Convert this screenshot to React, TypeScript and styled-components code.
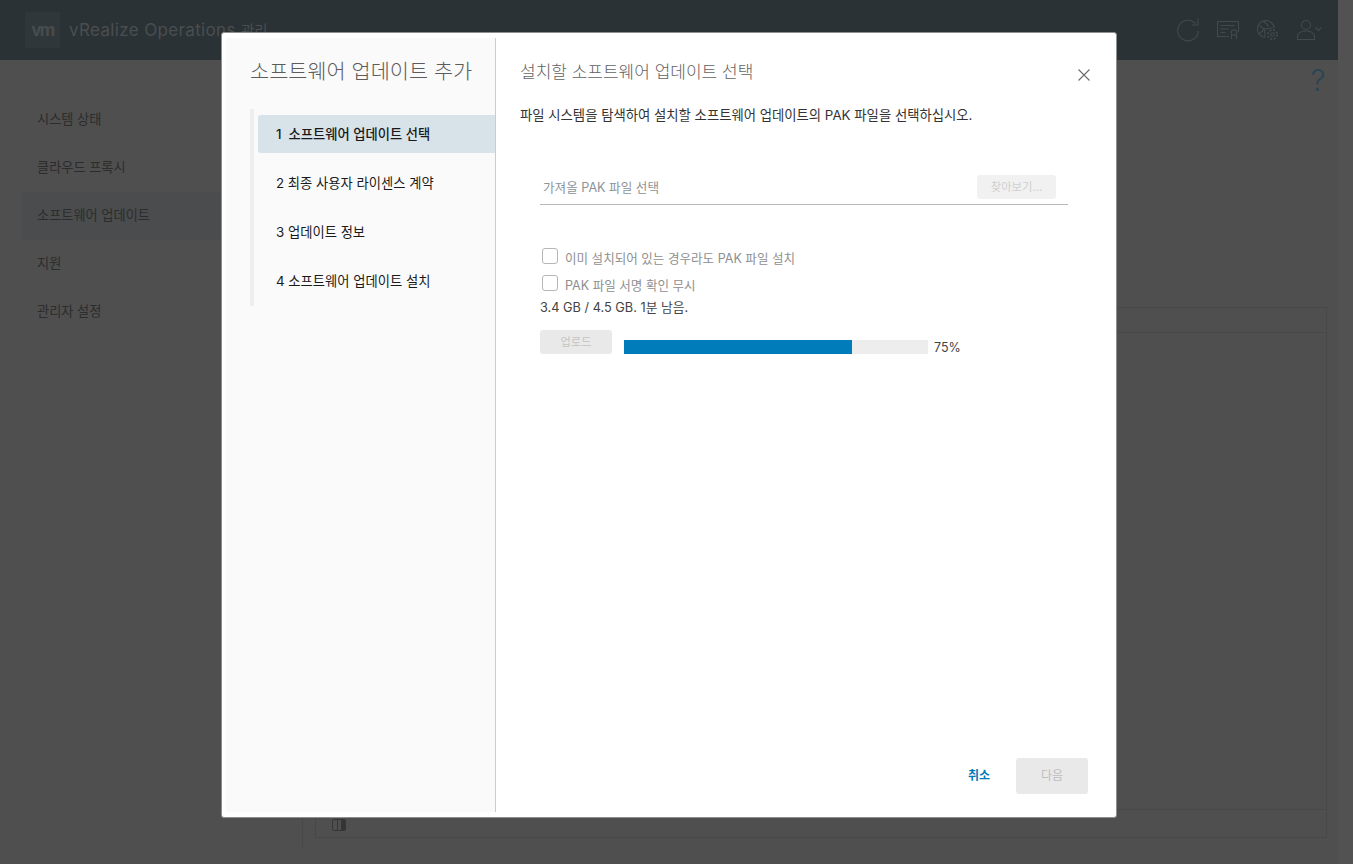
import type { FC } from "react";
import styled, { createGlobalStyle } from "styled-components";

const GlobalStyle = createGlobalStyle`
  html, body {
    margin: 0;
    padding: 0;
    height: 100%;
    overflow: hidden;
    background: #505050;
    font-family: "Inter", "Noto Sans CJK KR", sans-serif;
  }
  * { box-sizing: border-box; }
`;

const Page = styled.div`
  width: 1353px;
  height: 864px;
  position: relative;
  overflow: hidden;
  background: #525252;
`;

const Shell = styled.div`
  width: 1338px;
  height: 864px;
  display: flex;
  flex-direction: column;
  background: #4f4f4f;
`;

const Header = styled.header`
  height: 60px;
  flex: none;
  background: #2a3235;
  display: flex;
  align-items: center;
  padding: 0 16px 0 25px;
`;

const LogoBox = styled.div`
  width: 35px;
  height: 36px;
  background: #2f373a;
  display: flex;
  align-items: center;
  justify-content: center;
  color: #484c4e;
  font-size: 17px;
  font-weight: 700;
  letter-spacing: -1.5px;
`;

const ProductName = styled.div`
  margin: -2px 0 0 9px;
  color: #4a4e50;
  font-size: 17px;
  letter-spacing: 0.35px;
  white-space: nowrap;
`;

const ProductSuffix = styled.span`
  font-size: 14.5px;
  letter-spacing: 0;
`;

const HeaderIcons = styled.div`
  margin-left: auto;
  display: flex;
  align-items: center;
  gap: 18px;
  color: #43494c;
`;

const Body = styled.div`
  flex: 1;
  display: flex;
  min-height: 0;
`;

const Sidebar = styled.nav`
  width: 303px;
  flex: none;
  height: 788px;
  padding: 36px 0 0 22px;
  border-right: 1px solid #484848;
`;

const NavItem = styled.div<{ $active?: boolean }>`
  height: 48px;
  padding: 0 0 3px 15px;
  display: flex;
  align-items: center;
  font-size: 13.2px;
  color: #2c2c2c;
  background: ${({ $active }) => ($active ? "#4a4c4d" : "transparent")};
`;

const Content = styled.main`
  flex: 1;
  min-width: 0;
  padding: 247px 11px 26px 12px;
  display: flex;
  flex-direction: column;
`;

const TableBox = styled.div`
  flex: 1;
  border: 1px solid #484848;
  display: flex;
  flex-direction: column;
`;

const TableHead = styled.div`
  height: 25px;
  flex: none;
  border-bottom: 1px solid #484848;
`;

const TableBody = styled.div`
  flex: 1;
`;

const TableFoot = styled.div`
  height: 28px;
  flex: none;
  border-top: 1px solid #484848;
  display: flex;
  align-items: center;
  padding: 3px 0 0 16px;
`;

const ColumnToggle = styled.div`
  width: 14px;
  height: 12px;
  border: 1px solid #353535;
  border-radius: 2px;
  background: linear-gradient(
    90deg,
    #4f4f4f 0 4px,
    #353535 4px 5px,
    #4f4f4f 5px 8px,
    #353535 8px 100%
  );
`;

const HelpMark = styled.div`
  position: absolute;
  left: 1308px;
  top: 62px;
  width: 20px;
  text-align: center;
  color: #2a4453;
  font-size: 30px;
  font-weight: 300;
  line-height: 36px;
`;

const Overlay = styled.div`
  position: absolute;
  inset: 0;
  display: flex;
  align-items: flex-start;
  padding: 32px 0 0 221px;
`;

const Modal = styled.section`
  width: 896px;
  height: 786px;
  background: #fff;
  border: 1px solid #8f8f8f;
  border-radius: 3px;
  padding: 5px 0 5px 4px;
  display: flex;
  position: relative;
`;

const StepPanel = styled.aside`
  width: 270px;
  flex: none;
  background: #fafafa;
  border-right: 1px solid #cccccc;
  padding: 0 0 0 24px;
`;

const StepTitle = styled.h1`
  margin: 0;
  padding-top: 20px;
  height: 71px;
  font-size: 20.8px;
  line-height: 28px;
  font-weight: 300;
  color: #5c5c5c;
  white-space: nowrap;
`;

const StepList = styled.ol`
  list-style: none;
  margin: 0;
  padding: 6px 0 0 4px;
  height: 197px;
  border-left: 4px solid #eeeeee;
  display: flex;
  flex-direction: column;
  gap: 11px;
`;

const Step = styled.li<{ $active?: boolean }>`
  height: 38px;
  flex: none;
  padding: 0 0 2px 18px;
  display: flex;
  align-items: center;
  font-size: 13.3px;
  color: #1a1a1a;
  border-radius: 3px 0 0 3px;
  white-space: pre;
  background: ${({ $active }) => ($active ? "#d8e3e9" : "transparent")};
  font-weight: ${({ $active }) => ($active ? 500 : 400)};
`;

const Main = styled.div`
  flex: 1;
  min-width: 0;
  padding: 20px 28px 18px 24px;
  display: flex;
  flex-direction: column;
`;

const PaneTitle = styled.h2`
  margin: 0;
  font-size: 17px;
  line-height: 28px;
  font-weight: 300;
  color: #626262;
`;

const Intro = styled.p`
  margin: 19px 0 0;
  font-size: 13.35px;
  line-height: 20px;
  color: #333;
  white-space: nowrap;
`;

const Form = styled.div`
  padding: 0 0 0 20px;
  flex: 1;
  display: flex;
  flex-direction: column;
`;

const FileRow = styled.div`
  margin-top: 50px;
  width: 528px;
  height: 30px;
  border-bottom: 1px solid #b8b8b8;
  padding: 0 12px 0 3px;
  display: flex;
  align-items: flex-start;
  justify-content: space-between;
`;

const FilePlaceholder = styled.span`
  font-size: 12.6px;
  line-height: 26px;
  color: #8c9499;
`;

const BrowseButton = styled.div`
  width: 79px;
  height: 24px;
  background: #f1f1f1;
  border-radius: 3px;
  color: #cfcfcf;
  font-size: 11.3px;
  line-height: 24px;
  text-align: center;
`;

const OptionList = styled.div`
  margin-top: 42px;
  display: flex;
  flex-direction: column;
  gap: 9px;
`;

const Option = styled.label`
  display: flex;
  align-items: center;
  height: 18px;
  padding-left: 2px;
  font-size: 12.55px;
  color: #8f8f8f;
`;

const OptionText = styled.span`
  padding-top: 3px;
`;

const Checkbox = styled.span`
  width: 16px;
  height: 16px;
  border: 1px solid #b6b6b6;
  border-radius: 3px;
  margin-right: 7px;
  background: #fff;
`;

const ProgressNote = styled.div`
  margin-top: 7px;
  font-size: 12.75px;
  line-height: 18px;
  color: #444;
`;

const UploadRow = styled.div`
  margin-top: 13px;
  display: flex;
  align-items: flex-start;
`;

const UploadButton = styled.div`
  width: 72px;
  height: 24px;
  background: #e9e9e9;
  border-radius: 3px;
  color: #c4c4c4;
  font-size: 11.2px;
  line-height: 24px;
  text-align: center;
`;

const Track = styled.div`
  width: 304px;
  height: 14px;
  margin: 10px 0 0 12px;
  background: #ededed;
`;

const Fill = styled.div`
  height: 100%;
  background: #007cbb;
`;

const Percent = styled.span`
  margin: 10px 0 0 6px;
  font-size: 12.5px;
  line-height: 16px;
  color: #444;
`;

const Footer = styled.div`
  margin-top: auto;
  display: flex;
  justify-content: flex-end;
  align-items: center;
  gap: 26px;
`;

const CancelButton = styled.div`
  padding-bottom: 4px;
  font-size: 12px;
  font-weight: 700;
  color: #0079b8;
`;

const NextButton = styled.div`
  width: 72px;
  height: 36px;
  background: #e9e9e9;
  border-radius: 3px;
  color: #bdbdbd;
  font-size: 12px;
  line-height: 35px;
  text-align: center;
`;

const CloseButton = styled.div`
  position: absolute;
  left: 856px;
  top: 36px;
  width: 12px;
  height: 12px;
  color: #6b6b6b;
  display: flex;
`;

const RefreshIcon: FC = () => (
  <svg width="22" height="24" viewBox="0 0 22 24" fill="none" stroke="currentColor" strokeWidth="1.1">
    <path d="M18.5 5.5A10.3 10.3 0 1 0 21.3 13" />
    <path d="M21 0.5v6.5h-6.5" />
  </svg>
);

const CertificateIcon: FC = () => (
  <svg width="22" height="18" viewBox="0 0 22 18" fill="none" stroke="currentColor" strokeWidth="1.1">
    <path d="M12 15.5H0.5V0.5h21V11" />
    <path d="M3.5 4.5h14M3.5 8h8M3.5 11.5h5" />
    <circle cx="17" cy="11.5" r="2.8" />
    <path d="M14.5 18v-4M19.5 18v-4" />
  </svg>
);

const GlobeGearIcon: FC = () => (
  <svg width="22" height="21" viewBox="0 0 22 21" fill="none" stroke="currentColor" strokeWidth="1.1">
    <path d="M8.5 17.5A8.5 8.5 0 1 1 17.3 8" />
    <path d="M1.5 5l6 4-5.5 5M6.5 1 12 6.5M7.5 9l8-1M7.5 9 8 17" />
    <circle cx="15.5" cy="14.5" r="1.8" />
    <circle cx="15.5" cy="14.5" r="4.6" strokeWidth="1.8" strokeDasharray="2 1.6" />
  </svg>
);

const UserIcon: FC = () => (
  <svg width="25" height="20" viewBox="0 0 25 20" fill="none" stroke="currentColor" strokeWidth="1.1">
    <circle cx="9" cy="5" r="4.5" />
    <path d="M0.5 19.5v-3.5c0-3 4-5 8.5-5s8.5 2 8.5 5v3.5z" />
    <path d="M18.5 7.5l3 3 3-3" />
  </svg>
);

const navItems = ["시스템 상태", "클라우드 프록시", "소프트웨어 업데이트", "지원", "관리자 설정"];

const steps = [
  "1  소프트웨어 업데이트 선택",
  "2 최종 사용자 라이센스 계약",
  "3 업데이트 정보",
  "4 소프트웨어 업데이트 설치",
];

const App: FC = () => {
  const progress = 75;

  return (
    <Page>
      <GlobalStyle />
      <Shell>
        <Header>
          <LogoBox>vm</LogoBox>
          <ProductName>
            vRealize Operations <ProductSuffix>관리</ProductSuffix>
          </ProductName>
          <HeaderIcons>
            <RefreshIcon />
            <CertificateIcon />
            <GlobeGearIcon />
            <UserIcon />
          </HeaderIcons>
        </Header>
        <Body>
          <Sidebar>
            {navItems.map((item) => (
              <NavItem key={item} $active={item === "소프트웨어 업데이트"}>
                {item}
              </NavItem>
            ))}
          </Sidebar>
          <Content>
            <TableBox>
              <TableHead />
              <TableBody />
              <TableFoot>
                <ColumnToggle />
              </TableFoot>
            </TableBox>
          </Content>
        </Body>
      </Shell>
      <HelpMark>?</HelpMark>
      <Overlay>
        <Modal>
          <StepPanel>
            <StepTitle>소프트웨어 업데이트 추가</StepTitle>
            <StepList>
              {steps.map((step, i) => (
                <Step key={step} $active={i === 0}>
                  {step}
                </Step>
              ))}
            </StepList>
          </StepPanel>
          <Main>
            <PaneTitle>설치할 소프트웨어 업데이트 선택</PaneTitle>
            <Intro>파일 시스템을 탐색하여 설치할 소프트웨어 업데이트의 PAK 파일을 선택하십시오.</Intro>
            <Form>
              <FileRow>
                <FilePlaceholder>가져올 PAK 파일 선택</FilePlaceholder>
                <BrowseButton>찾아보기...</BrowseButton>
              </FileRow>
              <OptionList>
                <Option>
                  <Checkbox />
                  <OptionText>이미 설치되어 있는 경우라도 PAK 파일 설치</OptionText>
                </Option>
                <Option>
                  <Checkbox />
                  <OptionText>PAK 파일 서명 확인 무시</OptionText>
                </Option>
              </OptionList>
              <ProgressNote>3.4 GB / 4.5 GB. 1분 남음.</ProgressNote>
              <UploadRow>
                <UploadButton>업로드</UploadButton>
                <Track>
                  <Fill style={{ width: `${progress}%` }} />
                </Track>
                <Percent>{progress}%</Percent>
              </UploadRow>
            </Form>
            <Footer>
              <CancelButton>취소</CancelButton>
              <NextButton>다음</NextButton>
            </Footer>
          </Main>
          <CloseButton>
            <svg width="12" height="12" viewBox="0 0 12 12" stroke="currentColor" strokeWidth="1.1">
              <path d="M0.5 0.5l11 11M11.5 0.5l-11 11" />
            </svg>
          </CloseButton>
        </Modal>
      </Overlay>
    </Page>
  );
};

export default App;
